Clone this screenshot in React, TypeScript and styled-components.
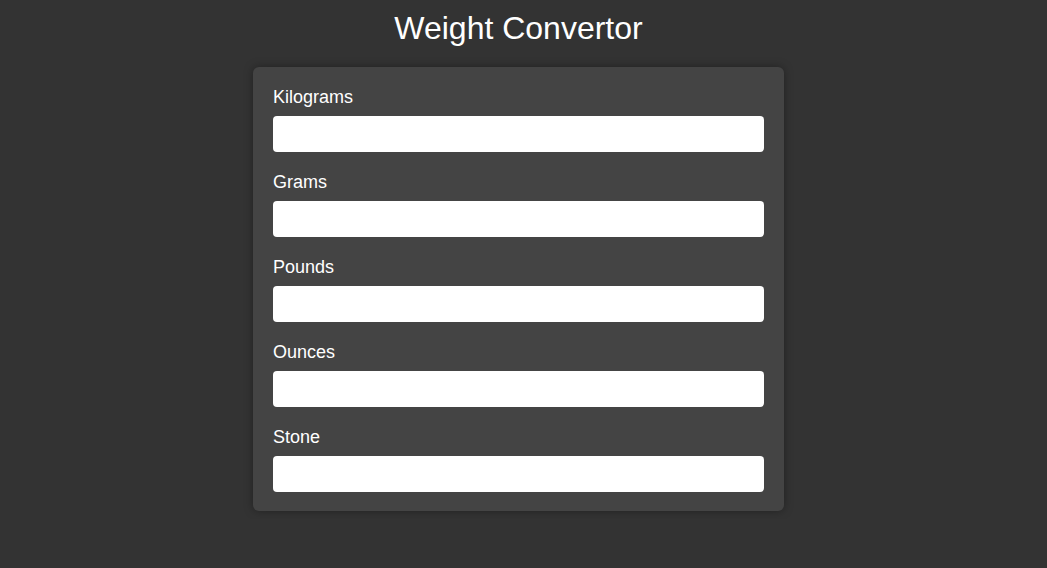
import React from "react";
import styled, { createGlobalStyle } from "styled-components";

const Global = createGlobalStyle`
  html, body {
    margin: 0;
    background: #333333;
  }
  body {
    padding: 10px 10px 8px 0;
    font-family: "Liberation Sans", Arial, Helvetica, sans-serif;
    color: #ffffff;
  }
`;

const Page = styled.main`
  display: flex;
  flex-direction: column;
  align-items: center;
`;

const Title = styled.h1`
  margin: 0;
  font-size: 32px;
  font-weight: 400;
  line-height: 37px;
  color: #ffffff;
`;

const Card = styled.form`
  margin-top: 20px;
  width: 531px;
  box-sizing: border-box;
  padding: 20px 20px 19px;
  background: #444444;
  border-radius: 6px;
  box-shadow: 0 0 10px rgba(0, 0, 0, 0.35);
  display: flex;
  flex-direction: column;
  gap: 20px;
`;

const Field = styled.div`
  display: flex;
  flex-direction: column;
`;

const Label = styled.label`
  font-size: 18px;
  line-height: 21px;
  margin-bottom: 8px;
  color: #ffffff;
`;

const Input = styled.input`
  height: 36px;
  width: 100%;
  box-sizing: border-box;
  border: none;
  border-radius: 4px;
  background: #ffffff;
  padding: 0 10px;
  font-size: 16px;
  font-family: inherit;
  outline: none;
`;

const units = ["Kilograms", "Grams", "Pounds", "Ounces", "Stone"];

export default function App() {
  return (
    <>
      <Global />
      <Page>
        <Title>Weight Convertor</Title>
        <Card onSubmit={(e) => e.preventDefault()}>
          {units.map((u) => (
            <Field key={u}>
              <Label htmlFor={u}>{u}</Label>
              <Input id={u} type="number" />
            </Field>
          ))}
        </Card>
      </Page>
    </>
  );
}
